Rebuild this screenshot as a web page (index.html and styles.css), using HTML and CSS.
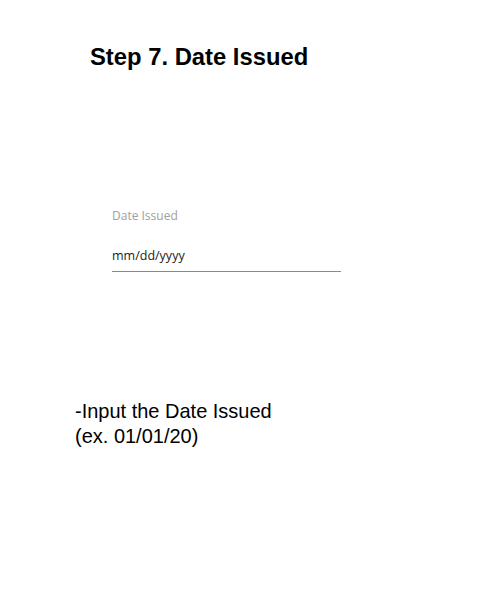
FILE: index.html
```html
<!DOCTYPE html>
<html>
<head>
<meta charset="utf-8">
<link rel="stylesheet" href="styles.css">
</head>
<body>
<div class="page">
  <h1 class="title">Step 7. Date Issued</h1>
  <div class="field">
    <div class="field-label">Date Issued</div>
    <div class="field-input">mm/dd/yyyy</div>
  </div>
  <p class="note">-Input the Date Issued<br>(ex. 01/01/20)</p>
</div>
</body>
</html>
```
FILE: styles.css
```css
html, body {
  margin: 0;
  padding: 0;
  background: #ffffff;
}
.page {
  width: 500px;
  height: 600px;
  display: flex;
  flex-direction: column;
}
.title {
  margin: 43px 0 0 90px;
  font-family: "Liberation Sans", Arial, sans-serif;
  font-weight: bold;
  font-size: 23.8px;
  line-height: 28px;
  color: #000;
}
.field {
  margin: 137px 0 0 112px;
  width: 229px;
}
.field-label {
  font-family: "Open Sans", sans-serif;
  font-size: 12px;
  line-height: 16px;
  color: #a0a0a0;
}
.field-input {
  margin-top: 24px;
  font-family: "Open Sans", sans-serif;
  font-size: 12.5px;
  line-height: 16px;
  color: #222;
  padding-bottom: 7px;
  border-bottom: 1px solid #8a8a8a;
}
.note {
  margin: 126px 0 0 75px;
  font-family: "Liberation Sans", Arial, sans-serif;
  font-size: 21px;
  line-height: 25px;
  color: #000;
  transform: scaleX(0.952);
  transform-origin: left top;
}
```
